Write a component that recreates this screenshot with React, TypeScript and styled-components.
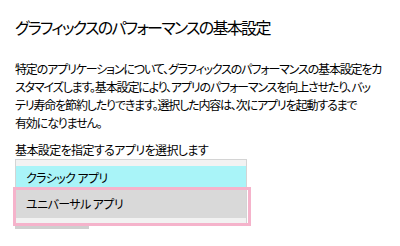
import React from "react";
import styled, { createGlobalStyle } from "styled-components";

const Global = createGlobalStyle`
  body {
    margin: 0;
    background: #ffffff;
    font-family: "Noto Sans CJK JP", "Noto Sans", sans-serif;
    color: #000000;
  }
`;

const Page = styled.div`
  width: 400px;
  height: 246px;
  padding: 14px 0 0 15px;
  box-sizing: border-box;
  overflow: hidden;
`;

const Title = styled.h1`
  margin: 0;
  font-size: 16px;
  line-height: 26px;
  font-weight: 400;
  font-feature-settings: "palt";
  letter-spacing: -1.7px;
  white-space: nowrap;
`;

const Description = styled.p`
  margin: 20px 0 0;
  font-size: 12px;
  line-height: 18px;
  font-feature-settings: "palt";
  letter-spacing: -1.15px;
  white-space: nowrap;
`;

const Line = styled.span`
  display: block;
`;

const Label = styled.div`
  margin-top: 10px;
  font-size: 12px;
  line-height: 16px;
  font-feature-settings: "palt";
  letter-spacing: -0.6px;
  white-space: nowrap;
`;

const Picker = styled.div`
  position: relative;
  margin-top: 1px;
  width: 232px;
`;

const ListBox = styled.div`
  display: flex;
  flex-direction: column;
  padding: 6px 0 6px;
  border: 1px solid #d4d4d4;
  border-bottom: none;
  background: #f2f2f2;
`;

const Item = styled.div<{ $bg: string; $h: number }>`
  display: flex;
  align-items: center;
  height: ${(p) => p.$h}px;
  padding-left: 10px;
  background: ${(p) => p.$bg};
  font-size: 12px;
  font-feature-settings: "palt";
  letter-spacing: -0.6px;
  white-space: nowrap;
`;

const Peek = styled.div`
  margin-top: 2px;
  width: 74px;
  height: 3px;
  background: #cfcfcf;
`;

const Highlight = styled.div`
  position: absolute;
  left: -2px;
  top: 28px;
  width: 238px;
  height: 39px;
  box-sizing: border-box;
  border: 3px solid #f5b3cb;
  pointer-events: none;
`;

export default function App() {
  return (
    <Page>
      <Global />
      <Title>グラフィックスのパフォーマンスの基本設定</Title>
      <Description>
        <Line>特定のアプリケーションについて、グラフィックスのパフォーマンスの基本設定をカ</Line>
        <Line>スタマイズします。基本設定により、アプリのパフォーマンスを向上させたり、バッ</Line>
        <Line>テリ寿命を節約したりできます。選択した内容は、次にアプリを起動するまで</Line>
        <Line>有効になりません。</Line>
      </Description>
      <Label>基本設定を指定するアプリを選択します</Label>
      <Picker>
        <ListBox>
          <Item $bg="#a9f4f8" $h={22}>クラシック アプリ</Item>
          <Item $bg="#d9d9d9" $h={30}>ユニバーサル アプリ</Item>
        </ListBox>
        <Peek />
        <Highlight />
      </Picker>
    </Page>
  );
}
